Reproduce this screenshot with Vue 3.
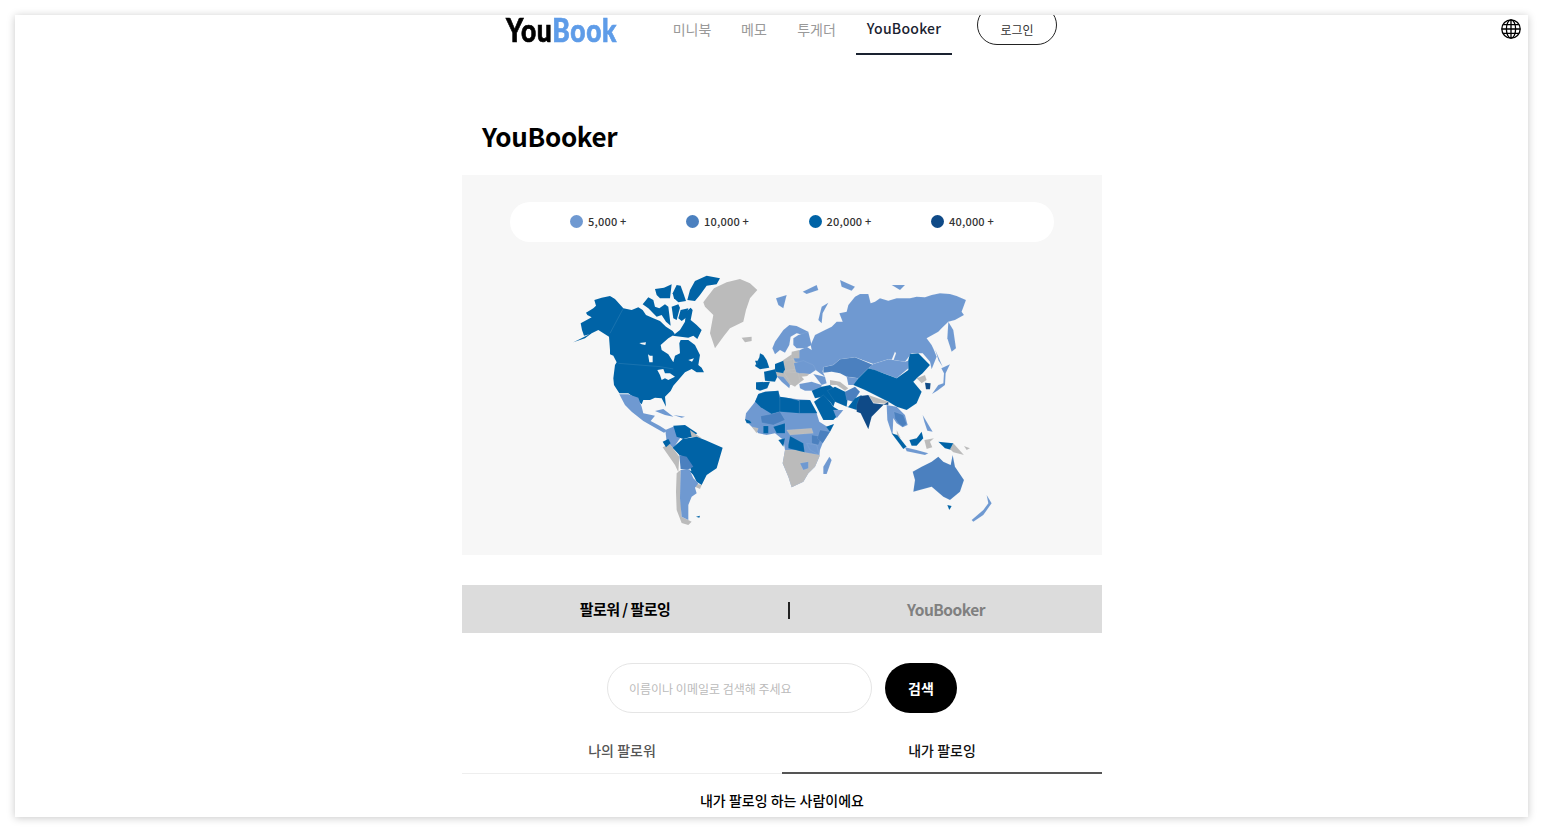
<script setup>
const nav = [
  { label: '미니북', width: 68 },
  { label: '메모', width: 56 },
  { label: '투게더', width: 69 },
]
const legend = [
  { label: '5,000 +', color: '#6f99d1' },
  { label: '10,000 +', color: '#4b80bf' },
  { label: '20,000 +', color: '#0063a6' },
  { label: '40,000 +', color: '#0f4a87' },
]
const L = '#6f99d1', M = '#4b80bf', B = '#0063a6', D = '#0f4a87', G = '#bbbbbb', W = '#f7f7f7'
const americas = [
  [B, '40,232 60,222 88,208 72,212 66,195 62,175 80,165 95,157 82,150 78,143 100,130 108,122 103,105 125,98 150,93 165,102 190,130 215,135 235,127 248,135 258,150 280,160 300,168 318,185 338,198 345,208 325,220 302,240 305,255 325,268 340,292 345,272 360,265 358,235 362,225 385,225 405,240 420,270 415,300 425,308 432,322 410,322 395,312 375,322 355,345 340,362 332,378 315,395 318,425 305,400 285,398 270,405 250,405 245,418 225,400 205,385 178,385 162,360 160,340 165,300 170,292 160,272 150,255 147,215 115,195 95,205 75,220'],
  [B, '248,118 265,97 280,105 285,125 298,130 315,118 325,125 330,165 332,182 318,170 305,150 290,155 265,130'],
  [B, '382,105 390,75 405,48 440,32 480,40 470,58 440,62 420,90 405,108'],
  [B, '338,212 360,195 375,170 378,140 392,128 398,135 392,165 410,180 425,195 412,222 400,212 385,218 362,215'],
  [B, '285,72 312,68 335,58 330,100 300,100 290,90'],
  [B, '350,60 362,62 372,90 378,108 355,112 342,100 338,85'],
  [B, '335,125 355,118 360,128 350,165 340,160'],
  [B, '362,135 385,130 378,158 365,168 355,160'],
  [B, '150,255 158,255 160,272 150,268'],
  [W, '238,234 258,232 256,240 245,238'],
  [W, '264,268 270,272 278,272 278,292 268,292'],
  [W, '292,315 310,312 315,325 330,325 345,335 325,345 315,340 305,345 300,330'],
  [W, '385,285 402,280 396,290'],
  [L, '178,388 205,388 235,398 245,425 250,445 285,452 272,468 300,483 322,497 312,503 292,492 250,468 215,440 195,420'],
  [L, '285,438 310,432 340,455 315,450'],
  [L, '340,450 375,455 365,458'],
  [L, '316,495 345,483 360,520 340,550 320,530'],
  [B, '340,482 375,480 412,505 395,515 370,522 350,515'],
  [G, '390,495 425,520 395,515'],
  [G, '308,547 330,538 358,575 355,622 345,600'],
  [B, '308,530 325,522 332,535 318,547'],
  [B, '338,548 368,522 410,515 435,525 488,548 470,610 440,630 425,660 410,650 395,620 380,580 358,570'],
  [M, '358,570 380,575 400,605 382,615 362,612'],
  [B, '385,615 415,625 410,640'],
  [G, '405,655 425,660 420,672 405,665'],
  [G, '350,625 362,615 362,700 365,755 395,770 385,780 365,774 350,735 348,680'],
  [L, '362,615 388,613 400,640 415,655 405,668 410,685 395,695 385,720 385,765 365,755 360,700'],
  [B, '408,755 420,752 418,758'],
  [G, '430,112 440,98 462,70 500,52 540,42 570,55 592,75 570,100 558,135 550,170 510,190 490,215 465,250 450,205 460,150 435,125'],
  [G, '545,218 575,215 575,228 555,232'],
]
const eurasia = [
  [G, '100,300 130,270 160,250 200,270 220,300 190,330 170,345 150,345 110,320'],
  [L, '215,240 212,225 225,195 255,180 275,170 290,155 308,155 298,130 320,125 325,105 345,80 360,72 385,72 392,100 405,95 420,85 445,92 470,85 510,85 530,80 555,82 575,75 600,70 630,72 650,78 678,90 665,125 672,135 645,150 625,155 605,175 595,185 560,205 575,225 582,240 590,260 575,298 570,275 548,250 515,250 495,275 445,268 400,282 345,262 300,268 280,285 250,292 248,305 255,320 240,310 220,295 195,280 165,275 155,250 180,240 200,230'],
  [L, '625,155 640,180 648,235 635,245 622,205'],
  [L, '235,150 245,110 265,98 248,130 245,160'],
  [L, '108,85 140,75 130,115 115,105'],
  [L, '188,65 230,45 235,60 200,72'],
  [L, '300,30 345,50 335,62 305,50'],
  [L, '455,45 495,45 480,60'],
  [W, '455,270 465,245 468,250 460,272'],
  [L, '97,235 105,215 130,180 148,165 170,168 205,185 190,195 170,190 152,200 148,225 135,248 120,240 105,253'],
  [L, '160,205 175,195 205,185 215,225 195,235 170,235 160,225'],
  [G, '155,245 178,240 178,265 155,265'],
  [L, '160,280 190,272 220,285 228,300 210,312 190,310 170,310'],
  [G, '130,275 160,268 165,298 135,302'],
  [B, '105,282 130,272 135,298 130,310 105,305'],
  [B, '45,288 58,262 60,250 70,255 80,270 88,293 60,298'],
  [B, '45,272 55,272 50,285'],
  [B, '72,305 105,298 112,320 105,335 75,332'],
  [B, '48,337 90,335 82,355 60,362 48,358'],
  [L, '110,318 130,320 150,345 148,355 125,335'],
  [G, '130,305 175,308 180,335 165,350 155,345'],
  [W, '185,320 225,316 235,330 200,336'],
  [L, '178,342 215,335 245,345 242,362 195,362 180,355'],
  [L, '220,312 255,320 260,340 245,345'],
  [B, '215,362 245,350 270,345 290,362 285,395 280,410 270,395 250,380 225,385'],
  [G, '270,330 300,335 325,355 315,362 290,345 270,345'],
  [M, '250,292 280,285 300,268 345,262 400,285 385,295 355,325 320,320 300,310 275,305 250,308'],
  [L, '400,282 445,268 495,275 510,270 505,295 470,325 430,310 385,295'],
  [L, '320,320 355,325 345,345 325,345'],
  [B, '505,270 510,252 535,250 570,285 548,310 535,320 520,335 545,365 530,400 500,420 470,410 445,395 405,375 375,360 340,345 355,325 385,295 405,300 430,310 470,325 505,300'],
  [G, '530,325 555,315 560,330 545,340'],
  [D, '555,338 572,340 570,358 558,358'],
  [L, '576,372 595,345 610,340 612,310 604,295 630,283 617,310 615,345 592,362'],
  [L, '585,238 608,290 596,272'],
  [B, '262,362 285,350 325,370 320,410 285,395'],
  [M, '315,365 345,350 360,365 340,395 320,390'],
  [B, '325,410 345,385 365,375 360,395 350,420 320,410'],
  [G, '385,375 445,395 445,402 400,398'],
  [D, '350,405 360,378 385,375 400,400 445,405 445,395 430,405 395,440 385,478 362,430 350,425'],
  [B, '222,395 250,375 270,395 280,410 305,425 280,450 250,450'],
  [L, '280,420 310,420 290,445'],
  [L, '440,405 470,410 495,435 503,465 488,472 470,460 460,445 458,490 470,510 455,490 442,450'],
  [M, '462,425 490,435 500,462 488,470 475,460 465,445'],
  [G, '470,480 482,505 472,500'],
  [L, '45,395 55,372 75,365 115,362 120,380 150,385 175,388 210,390 230,430 238,455 262,470 282,462 270,485 248,520 240,540 238,560 225,590 205,610 190,635 155,652 145,620 128,580 135,540 130,510 105,490 80,495 55,490 35,470 15,450 18,430 40,402'],
  [B, '45,395 55,372 75,365 115,362 120,385 120,425 95,432 62,412'],
  [B, '120,380 150,385 178,392 178,430 120,425'],
  [B, '178,390 210,390 232,430 178,430'],
  [M, '62,438 95,432 120,425 135,450 100,465 65,458'],
  [M, '215,495 245,500 235,525 215,520'],
  [M, '240,480 270,485 248,520 232,505'],
  [G, '140,480 215,475 220,490 150,495'],
  [B, '258,470 282,462 270,485'],
  [B, '15,447 30,452 35,460 20,460'],
  [B, '100,470 135,460 135,490 110,490'],
  [B, '70,468 85,468 85,490 70,490'],
  [G, '35,470 55,475 50,490'],
  [B, '115,510 135,505 130,530'],
  [B, '145,525 150,498 190,520 195,555 165,540 145,535'],
  [G, '128,580 135,540 165,540 200,548 240,555 225,590 205,610 190,635 155,652 145,620'],
  [L, '180,580 205,575 205,595 190,600'],
  [L, '200,520 230,525 238,555 210,540'],
  [L, '250,590 268,560 275,570 260,612 250,612'],
  [M, '518,605 545,590 575,575 595,560 610,575 632,585 638,555 645,590 672,630 660,665 630,690 610,680 575,650 520,665 525,630'],
  [B, '622,705 635,708 628,720'],
  [L, '695,750 730,720 745,700 740,675 755,700 730,735 700,755'],
  [B, '455,490 472,495 500,530 490,537'],
  [L, '495,532 530,540 565,550 555,555 500,544'],
  [B, '508,510 530,505 545,485 550,505 530,527 515,527'],
  [G, '553,510 582,505 570,515 577,532 560,537'],
  [B, '595,515 640,520 635,540 615,535'],
  [G, '640,520 672,555 640,547 630,538'],
  [G, '672,528 690,535 680,540'],
  [L, '548,435 578,485 562,482 553,455'],
]
</script>

<template>
  <div class="frame">
    <header class="head">
      <div class="head-in">
        <div class="logo"><span class="you">You</span><span class="book">Book</span></div>
        <nav class="nav">
          <a v-for="n in nav" :key="n.label" class="nav-item" :style="{ width: n.width + 'px' }">{{ n.label }}</a>
          <a class="nav-item active">YouBooker</a>
        </nav>
        <div class="login-clip"><button class="login">로그인</button></div>
      </div>
      <svg class="globe" viewBox="0 0 20 20" fill="none" stroke="#000" stroke-width="1.3">
        <circle cx="10" cy="10" r="9.2" />
        <ellipse cx="10" cy="10" rx="4.6" ry="9.2" />
        <path d="M10 .8v18.4M.8 10h18.4M2.2 5.6h15.6M2.2 14.4h15.6" />
      </svg>
    </header>

    <main class="col">
      <h1 class="title">YouBooker</h1>

      <section class="panel">
        <ul class="legend">
          <li v-for="l in legend" :key="l.label" class="leg">
            <i class="dot" :style="{ background: l.color }"></i><span class="leg-t">{{ l.label }}</span>
          </li>
        </ul>
        <svg class="map" viewBox="560 265 440 265" width="440" height="265">
          <g transform="translate(560 265) scale(.3333)">
            <polygon v-for="(s, i) in americas" :key="i" :points="s[1]" :fill="s[0]" />
            <path d="M150 205 190 130M175 295 300 305 340 312" fill="none" stroke="#fff" stroke-opacity=".3" />
          </g>
          <g transform="translate(740 270) scale(.3333)" stroke="#ffffff" stroke-opacity=".22" stroke-width="1">
            <polygon v-for="(s, i) in eurasia" :key="i" :points="s[1]" :fill="s[0]" />
          </g>
        </svg>
      </section>

      <div class="switch">
        <span class="sw on">팔로워 / 팔로잉</span>
        <span class="bar"></span>
        <span class="sw off">YouBooker</span>
      </div>

      <form class="search" @submit.prevent>
        <input class="field" placeholder="이름이나 이메일로 검색해 주세요" />
        <button class="go">검색</button>
      </form>

      <div class="subs">
        <div class="sub">나의 팔로워</div>
        <div class="sub cur">내가 팔로잉</div>
      </div>
      <p class="note">내가 팔로잉 하는 사람이에요</p>
    </main>
  </div>
</template>

<style>
html, body { margin: 0; background: #fff; overflow: hidden; }
</style>

<style scoped>
.frame {
  position: relative;
  box-sizing: border-box;
  width: 1513px;
  height: 802px;
  margin: 15px;
  background: #fff;
  box-shadow: 0 1px 8px rgba(0, 0, 0, .22);
  font-family: "Noto Sans CJK KR", "Noto Sans", sans-serif;
  color: #000;
}
.head { height: 40px; padding-left: 21px; }
.head-in {
  position: relative;
  display: flex;
  width: 640px;
  height: 40px;
  margin: 0 auto;
}
.logo {
  flex: none;
  width: 152px;
  height: 32px;
  margin-left: 44px;
  margin-top: -2px;
  font-family: Lato, sans-serif;
  font-weight: 900;
  font-size: 33px;
  line-height: 32px;
  letter-spacing: .8px;
  white-space: nowrap;
  -webkit-text-stroke: .7px currentColor;
  transform: scaleX(.8);
  transform-origin: left center;
}
.you { color: #000; }
.book { color: #5e9ce8; }
.nav { display: flex; height: 40px; }
.nav-item {
  box-sizing: border-box;
  height: 40px;
  padding-top: 3px;
  text-align: center;
  font-size: 14px;
  line-height: 22px;
  color: #999;
}
.nav-item.active {
  width: 96px;
  margin-left: 5px;
  padding-top: 2px;
  color: #1a2230;
  font-weight: 500;
  letter-spacing: .25px;
  border-bottom: 2px solid #1a2230;
}
.login-clip { width: 80px; height: 31px; margin-left: 25px; overflow: hidden; }
.login {
  display: block;
  box-sizing: border-box;
  width: 80px;
  height: 40px;
  margin-top: -10px;
  padding: 9px 0 0;
  border: 1px solid #222;
  border-radius: 20px;
  background: #fff;
  font: 400 12px/20px "Noto Sans CJK KR", sans-serif;
  color: #333;
}
.globe { position: absolute; top: 4px; right: 7px; width: 20px; height: 20px; }

.col { width: 640px; margin-left: 447px; }
.title {
  margin: 0;
  height: 120px;
  box-sizing: border-box;
  padding: 62px 0 0 20px;
  font-size: 26px;
  line-height: 38px;
  font-weight: 700;
  letter-spacing: -.3px;
}
.panel { height: 380px; background: #f7f7f7; overflow: hidden; }
.legend {
  display: flex;
  justify-content: center;
  gap: 59.5px;
  width: 544px;
  height: 40px;
  margin: 27px auto 23px;
  padding: 0;
  list-style: none;
  border-radius: 20px;
  background: #fff;
  align-items: center;
}
.leg {
  display: flex;
  align-items: center;
  gap: 5px;
  font-size: 11px;
  font-weight: 500;
  letter-spacing: .2px;
  color: #333;
}
.leg-t { position: relative; top: -1px; }
.dot { width: 13px; height: 13px; margin-top: -2px; border-radius: 50%; }
.map { display: block; margin-left: 98px; filter: blur(.35px); }

.switch {
  display: grid;
  grid-template-columns: 326px 2px 1fr;
  align-items: center;
  height: 48px;
  margin-top: 30px;
  background: #dcdcdc;
  text-align: center;
  line-height: 46px;
}
.sw { font-size: 15px; font-weight: 700; }
.sw.on { letter-spacing: -.55px; }
.sw.off { color: #808080; font-size: 15.5px; font-weight: 700; letter-spacing: -.5px; }
.bar { width: 2px; height: 17px; margin-top: 3px; background: #222; }

.search {
  display: flex;
  justify-content: center;
  gap: 13px;
  margin-top: 30px;
}
.field {
  box-sizing: border-box;
  width: 265px;
  height: 50px;
  padding: 0 21px;
  border: 1px solid #e5e5e5;
  border-radius: 25px;
  outline: none;
  font: 400 12px "Noto Sans CJK KR", sans-serif;
}
.field::placeholder { color: #bbb; }
.go {
  width: 72px;
  height: 50px;
  border: 0;
  border-radius: 25px;
  background: #000;
  color: #fff;
  font: 700 14px "Noto Sans CJK KR", sans-serif;
}
.subs { display: flex; margin-top: 20px; }
.sub {
  flex: 1;
  box-sizing: border-box;
  height: 41px;
  padding-top: 7px;
  text-align: center;
  font-size: 14px;
  font-weight: 500;
  line-height: 20px;
  color: #555;
  border-bottom: 1px solid #eee;
}
.sub.cur { color: #111; border-bottom: 2px solid #555; }
.note {
  margin: 16px 0 0;
  text-align: center;
  font-size: 14px;
  font-weight: 500;
  line-height: 20px;
  color: #000;
}
</style>
